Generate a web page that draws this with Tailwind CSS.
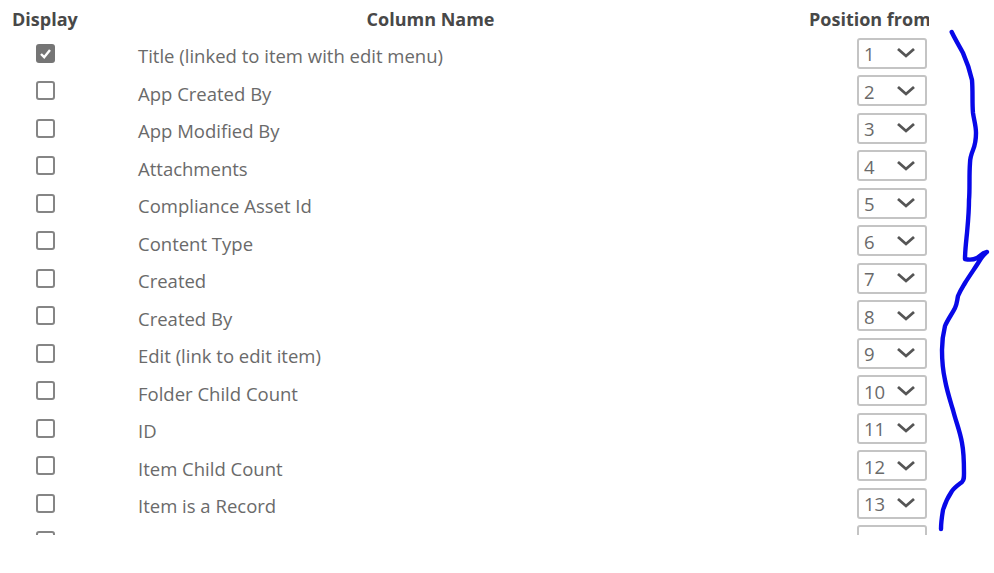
<!DOCTYPE html>
<html lang="en">
<head>
<meta charset="utf-8">
<title>Columns</title>
<script src="https://cdn.jsdelivr.net/npm/@tailwindcss/browser@4"></script>
</head>
<body class="bg-white">
<div class="relative w-[994px] h-[573px] overflow-hidden bg-white font-['Open_Sans',sans-serif]">
  <div class="w-[929px] h-[535px] overflow-hidden text-[#6a6a6a] text-[18.5px]">
    <div class="grid grid-cols-[90px_681px_158px] h-[34.5px] items-center pt-[5px] text-[18px] font-bold text-[#484848] whitespace-nowrap">
      <div class="pl-3">Display</div>
      <div class="text-center">Column Name</div>
      <div class="overflow-hidden pl-[38px]">Position from Left</div>
    </div>
    <div id="rows">
      <div class="grid grid-cols-[138px_719px_72px] h-[37.5px] items-center"><div class="pl-[36px]"><div class="w-[19px] h-[19px] rounded-[3px] bg-[#757575] flex items-center justify-center"><svg class="w-[13px] h-[13px]" viewBox="0 0 13 13"><path d="M2 7l3.2 3.2L11 3" fill="none" stroke="#fff" stroke-width="2.4"/></svg></div></div><div class="pt-[6px]">Title (linked to item with edit menu)</div><div class="w-[70px] h-[31px] border-2 border-[#c4c4c4] rounded-[3px] flex items-center justify-between pl-[5px] pr-[9px]"><span class="pt-[2px]">1</span><svg class="w-[20px] h-[12px]" viewBox="0 0 20 12"><path d="M2 2l8 7 8-7" fill="none" stroke="#555" stroke-width="2.8"/></svg></div></div>
      <div class="grid grid-cols-[138px_719px_72px] h-[37.5px] items-center"><div class="pl-[36px]"><div class="w-[19px] h-[19px] rounded-[3px] border-2 border-[#858585]"></div></div><div class="pt-[6px]">App Created By</div><div class="w-[70px] h-[31px] border-2 border-[#c4c4c4] rounded-[3px] flex items-center justify-between pl-[5px] pr-[9px]"><span class="pt-[2px]">2</span><svg class="w-[20px] h-[12px]" viewBox="0 0 20 12"><path d="M2 2l8 7 8-7" fill="none" stroke="#555" stroke-width="2.8"/></svg></div></div>
      <div class="grid grid-cols-[138px_719px_72px] h-[37.5px] items-center"><div class="pl-[36px]"><div class="w-[19px] h-[19px] rounded-[3px] border-2 border-[#858585]"></div></div><div class="pt-[6px]">App Modified By</div><div class="w-[70px] h-[31px] border-2 border-[#c4c4c4] rounded-[3px] flex items-center justify-between pl-[5px] pr-[9px]"><span class="pt-[2px]">3</span><svg class="w-[20px] h-[12px]" viewBox="0 0 20 12"><path d="M2 2l8 7 8-7" fill="none" stroke="#555" stroke-width="2.8"/></svg></div></div>
      <div class="grid grid-cols-[138px_719px_72px] h-[37.5px] items-center"><div class="pl-[36px]"><div class="w-[19px] h-[19px] rounded-[3px] border-2 border-[#858585]"></div></div><div class="pt-[6px]">Attachments</div><div class="w-[70px] h-[31px] border-2 border-[#c4c4c4] rounded-[3px] flex items-center justify-between pl-[5px] pr-[9px]"><span class="pt-[2px]">4</span><svg class="w-[20px] h-[12px]" viewBox="0 0 20 12"><path d="M2 2l8 7 8-7" fill="none" stroke="#555" stroke-width="2.8"/></svg></div></div>
      <div class="grid grid-cols-[138px_719px_72px] h-[37.5px] items-center"><div class="pl-[36px]"><div class="w-[19px] h-[19px] rounded-[3px] border-2 border-[#858585]"></div></div><div class="pt-[6px]">Compliance Asset Id</div><div class="w-[70px] h-[31px] border-2 border-[#c4c4c4] rounded-[3px] flex items-center justify-between pl-[5px] pr-[9px]"><span class="pt-[2px]">5</span><svg class="w-[20px] h-[12px]" viewBox="0 0 20 12"><path d="M2 2l8 7 8-7" fill="none" stroke="#555" stroke-width="2.8"/></svg></div></div>
      <div class="grid grid-cols-[138px_719px_72px] h-[37.5px] items-center"><div class="pl-[36px]"><div class="w-[19px] h-[19px] rounded-[3px] border-2 border-[#858585]"></div></div><div class="pt-[6px]">Content Type</div><div class="w-[70px] h-[31px] border-2 border-[#c4c4c4] rounded-[3px] flex items-center justify-between pl-[5px] pr-[9px]"><span class="pt-[2px]">6</span><svg class="w-[20px] h-[12px]" viewBox="0 0 20 12"><path d="M2 2l8 7 8-7" fill="none" stroke="#555" stroke-width="2.8"/></svg></div></div>
      <div class="grid grid-cols-[138px_719px_72px] h-[37.5px] items-center"><div class="pl-[36px]"><div class="w-[19px] h-[19px] rounded-[3px] border-2 border-[#858585]"></div></div><div class="pt-[6px]">Created</div><div class="w-[70px] h-[31px] border-2 border-[#c4c4c4] rounded-[3px] flex items-center justify-between pl-[5px] pr-[9px]"><span class="pt-[2px]">7</span><svg class="w-[20px] h-[12px]" viewBox="0 0 20 12"><path d="M2 2l8 7 8-7" fill="none" stroke="#555" stroke-width="2.8"/></svg></div></div>
      <div class="grid grid-cols-[138px_719px_72px] h-[37.5px] items-center"><div class="pl-[36px]"><div class="w-[19px] h-[19px] rounded-[3px] border-2 border-[#858585]"></div></div><div class="pt-[6px]">Created By</div><div class="w-[70px] h-[31px] border-2 border-[#c4c4c4] rounded-[3px] flex items-center justify-between pl-[5px] pr-[9px]"><span class="pt-[2px]">8</span><svg class="w-[20px] h-[12px]" viewBox="0 0 20 12"><path d="M2 2l8 7 8-7" fill="none" stroke="#555" stroke-width="2.8"/></svg></div></div>
      <div class="grid grid-cols-[138px_719px_72px] h-[37.5px] items-center"><div class="pl-[36px]"><div class="w-[19px] h-[19px] rounded-[3px] border-2 border-[#858585]"></div></div><div class="pt-[6px]">Edit (link to edit item)</div><div class="w-[70px] h-[31px] border-2 border-[#c4c4c4] rounded-[3px] flex items-center justify-between pl-[5px] pr-[9px]"><span class="pt-[2px]">9</span><svg class="w-[20px] h-[12px]" viewBox="0 0 20 12"><path d="M2 2l8 7 8-7" fill="none" stroke="#555" stroke-width="2.8"/></svg></div></div>
      <div class="grid grid-cols-[138px_719px_72px] h-[37.5px] items-center"><div class="pl-[36px]"><div class="w-[19px] h-[19px] rounded-[3px] border-2 border-[#858585]"></div></div><div class="pt-[6px]">Folder Child Count</div><div class="w-[70px] h-[31px] border-2 border-[#c4c4c4] rounded-[3px] flex items-center justify-between pl-[5px] pr-[9px]"><span class="pt-[2px]">10</span><svg class="w-[20px] h-[12px]" viewBox="0 0 20 12"><path d="M2 2l8 7 8-7" fill="none" stroke="#555" stroke-width="2.8"/></svg></div></div>
      <div class="grid grid-cols-[138px_719px_72px] h-[37.5px] items-center"><div class="pl-[36px]"><div class="w-[19px] h-[19px] rounded-[3px] border-2 border-[#858585]"></div></div><div class="pt-[6px]">ID</div><div class="w-[70px] h-[31px] border-2 border-[#c4c4c4] rounded-[3px] flex items-center justify-between pl-[5px] pr-[9px]"><span class="pt-[2px]">11</span><svg class="w-[20px] h-[12px]" viewBox="0 0 20 12"><path d="M2 2l8 7 8-7" fill="none" stroke="#555" stroke-width="2.8"/></svg></div></div>
      <div class="grid grid-cols-[138px_719px_72px] h-[37.5px] items-center"><div class="pl-[36px]"><div class="w-[19px] h-[19px] rounded-[3px] border-2 border-[#858585]"></div></div><div class="pt-[6px]">Item Child Count</div><div class="w-[70px] h-[31px] border-2 border-[#c4c4c4] rounded-[3px] flex items-center justify-between pl-[5px] pr-[9px]"><span class="pt-[2px]">12</span><svg class="w-[20px] h-[12px]" viewBox="0 0 20 12"><path d="M2 2l8 7 8-7" fill="none" stroke="#555" stroke-width="2.8"/></svg></div></div>
      <div class="grid grid-cols-[138px_719px_72px] h-[37.5px] items-center"><div class="pl-[36px]"><div class="w-[19px] h-[19px] rounded-[3px] border-2 border-[#858585]"></div></div><div class="pt-[6px]">Item is a Record</div><div class="w-[70px] h-[31px] border-2 border-[#c4c4c4] rounded-[3px] flex items-center justify-between pl-[5px] pr-[9px]"><span class="pt-[2px]">13</span><svg class="w-[20px] h-[12px]" viewBox="0 0 20 12"><path d="M2 2l8 7 8-7" fill="none" stroke="#555" stroke-width="2.8"/></svg></div></div>
      <div class="grid grid-cols-[138px_719px_72px] h-[37.5px] items-center"><div class="pl-[36px]"><div class="w-[19px] h-[19px] rounded-[3px] border-2 border-[#858585]"></div></div><div class="pt-[6px]"></div><div class="w-[70px] h-[31px] border-2 border-[#c4c4c4] rounded-[3px]"></div></div>
    </div>
  </div>
  <svg class="absolute left-0 top-0 w-[994px] h-[573px] pointer-events-none" viewBox="0 0 994 573"><path d="M951.7 32C956 41 960 47 963 53C967 62 970 71 972 80C973 92 972 102 973 113C974 120 976 126 976 133C976 140 975 145 973 150C971 155 970 158 970 163C969 176 970 188 969 200C969 212 968 222 967 233C966 243 965 251 965 259C969 260 973 260 977 258C980 256 982 253 987 252C984 254 982 257 980 260C977 265 970 275 965 283C962 288 960 291 958 296C957 301 957 304 955 308C952 314 948 319 945 326C943 334 942 342 942 350C942 361 943 371 945 380C947 391 950 400 953 410C956 422 960 431 962 443C964 453 964 463 964 473C964 478 964 480 962 482C958 485 955 487 952 491C948 497 945 503 943 510C942 516 941 522 941 529" fill="none" stroke="#0808e8" stroke-width="4.4" stroke-linecap="round" stroke-linejoin="round"/></svg>
</div>
</body>
</html>
